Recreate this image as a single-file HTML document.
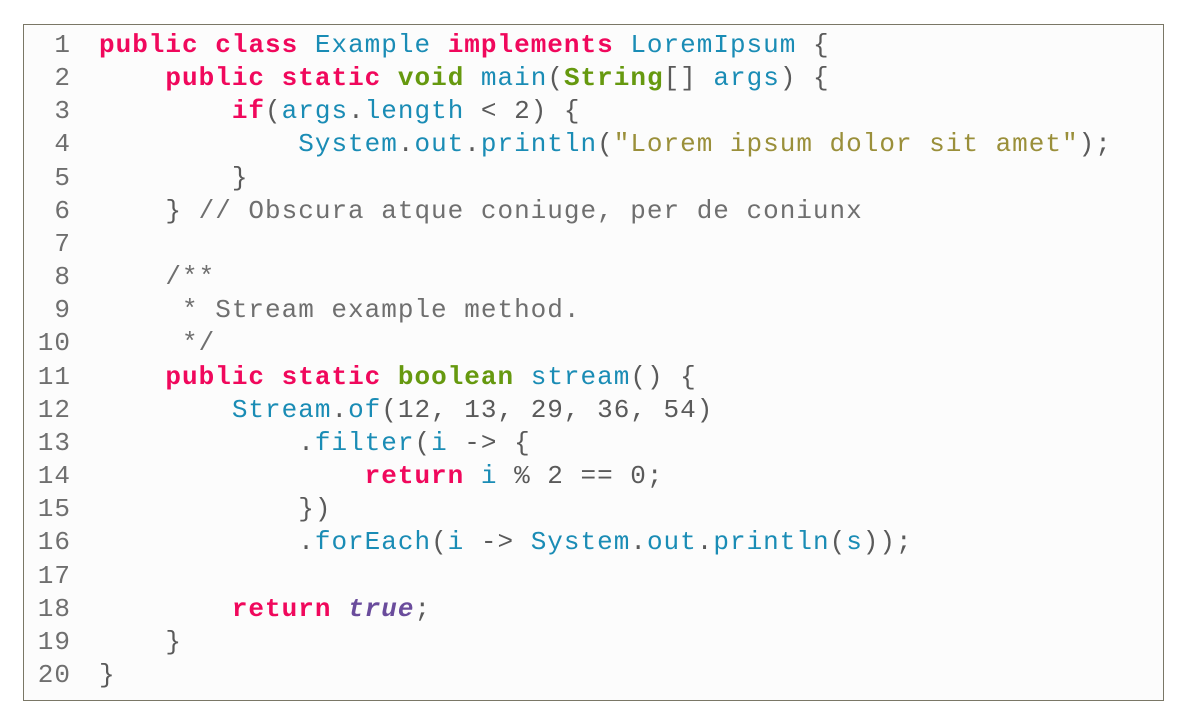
<!DOCTYPE html>
<html><head><meta charset="utf-8"><style>
body{margin:0;background:#fff;width:1182px;height:725px;overflow:hidden}
.box{position:absolute;left:23px;top:24px;width:1139px;height:675px;border:1px solid #7a7766;background:#fcfcfc}
pre{margin:0;position:absolute;top:4px;font-family:"Liberation Mono",monospace;font-size:26px;letter-spacing:1px;line-height:33.15px;color:#5a5a5a}
.ln{left:0;width:47px;text-align:right;color:#6f6f6f}
.code{left:75px}
.k{color:#f0085c;font-weight:bold}
.t{color:#66990f;font-weight:bold}
.b{color:#1a8cb5}
.s{color:#9a8f3a}
.c{color:#6f6f6f}
.v{color:#6a4c9c;font-weight:bold;font-style:italic}
</style></head><body><div class="box">
<pre class="ln">1
2
3
4
5
6
7
8
9
10
11
12
13
14
15
16
17
18
19
20</pre>
<pre class="code"><span class="k">public</span> <span class="k">class</span> <span class="b">Example</span> <span class="k">implements</span> <span class="b">LoremIpsum</span> {
    <span class="k">public</span> <span class="k">static</span> <span class="t">void</span> <span class="b">main</span>(<span class="t">String</span>[] <span class="b">args</span>) {
        <span class="k">if</span>(<span class="b">args</span>.<span class="b">length</span> &lt; 2) {
            <span class="b">System</span>.<span class="b">out</span>.<span class="b">println</span>(<span class="s">"Lorem ipsum dolor sit amet"</span>);
        }
    } <span class="c">// Obscura atque coniuge, per de coniunx</span>

    <span class="c">/**
     * Stream example method.
     */</span>
    <span class="k">public</span> <span class="k">static</span> <span class="t">boolean</span> <span class="b">stream</span>() {
        <span class="b">Stream</span>.<span class="b">of</span>(12, 13, 29, 36, 54)
            .<span class="b">filter</span>(<span class="b">i</span> -&gt; {
                <span class="k">return</span> <span class="b">i</span> % 2 == 0;
            })
            .<span class="b">forEach</span>(<span class="b">i</span> -&gt; <span class="b">System</span>.<span class="b">out</span>.<span class="b">println</span>(<span class="b">s</span>));

        <span class="k">return</span> <span class="v">true</span>;
    }
}</pre>
</div></body></html>
